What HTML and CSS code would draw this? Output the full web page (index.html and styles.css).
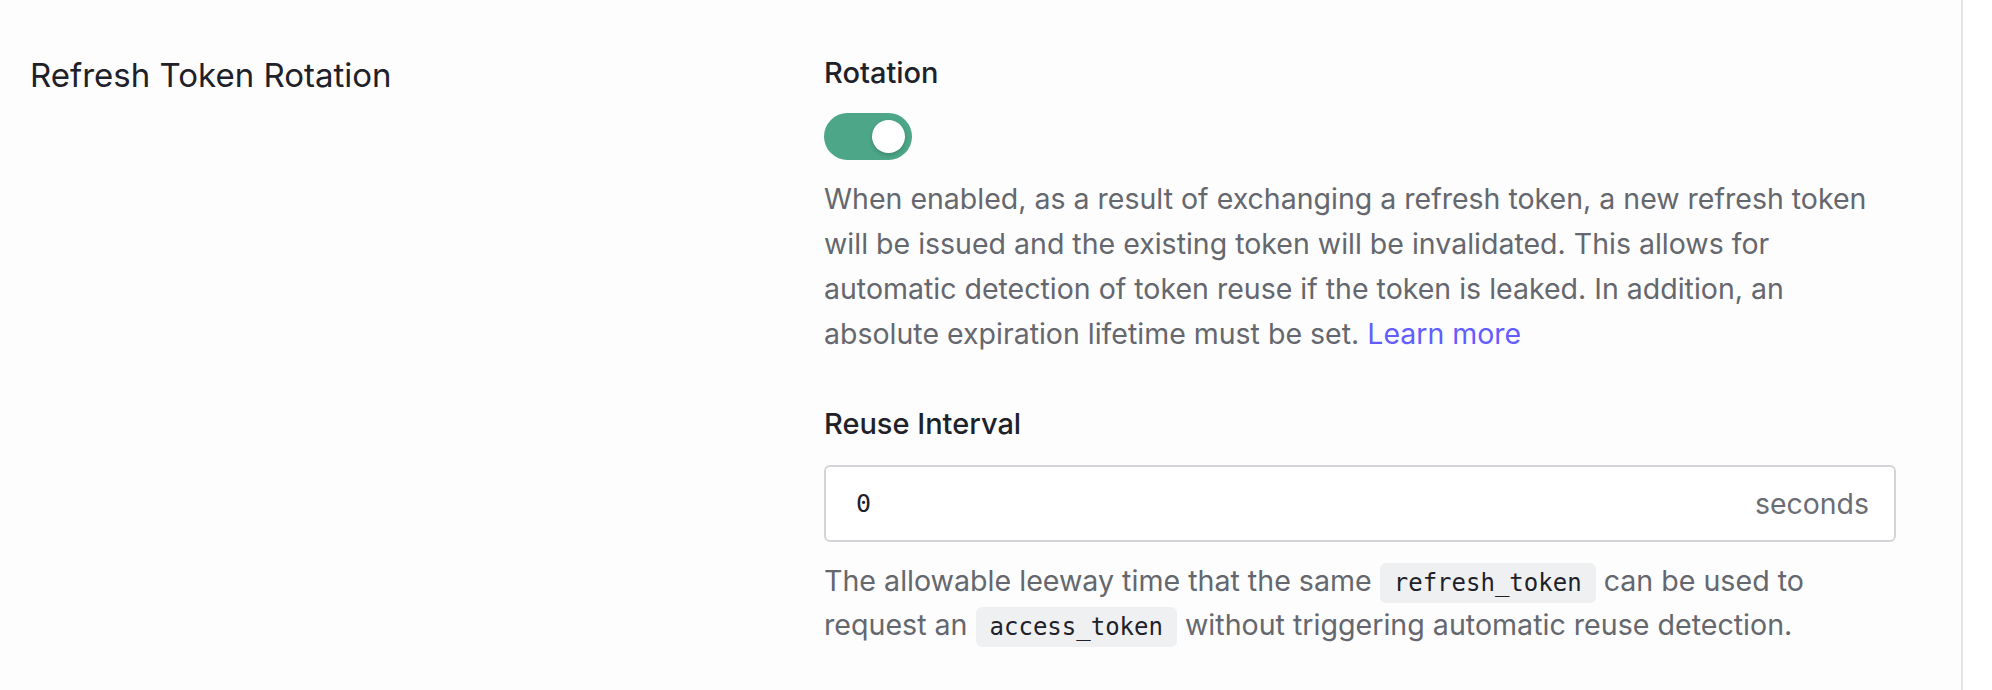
FILE: index.html
```html
<!DOCTYPE html>
<html lang="en">
<head>
<meta charset="utf-8">
<title>Refresh Token Rotation</title>
<link rel="stylesheet" href="styles.css">
</head>
<body>
<div class="page">
  <section class="section">
    <h2 class="section-title">Refresh Token Rotation</h2>
    <div class="fields">
      <div class="field">
        <div class="label">Rotation</div>
        <button class="switch" role="switch" aria-checked="true"><span class="knob"></span></button>
        <p class="help help-wide">When enabled, as a result of exchanging a refresh token, a new refresh token<br>will be issued and the existing token will be invalidated. This allows for<br>automatic detection of token reuse if the token is leaked. In addition, an<br>absolute expiration lifetime must be set. <a class="link" href="#">Learn more</a></p>
      </div>
      <div class="field field-reuse">
        <div class="label">Reuse Interval</div>
        <div class="input-box">
          <input class="input" type="text" value="0">
          <span class="suffix">seconds</span>
        </div>
        <p class="help help-code">The allowable leeway time that the same <code class="code">refresh_token</code> can be used to request an <code class="code">access_token</code> without triggering automatic reuse detection.</p>
      </div>
    </div>
  </section>
</div>
</body>
</html>
```
FILE: styles.css
```css
* { box-sizing: border-box; }
html, body { margin: 0; padding: 0; background: #ffffff; }
body {
  font-family: Inter, "Noto Sans", sans-serif;
  color: #1e2129;
}
.page {
  width: 1963px;
  min-height: 690px;
  border-right: 2px solid #e3e4e7;
  background: #fdfdfd;
}
.section {
  display: grid;
  grid-template-columns: 794px 1072px;
  padding: 55px 0 0 30px;
}
.section-title {
  margin: 1px 0 0 0;
  font-size: 33px;
  font-weight: 400;
  line-height: 38px;
  color: #1e2129;
}
.fields {
  display: flex;
  flex-direction: column;
}
.label {
  font-size: 29px;
  font-weight: 500;
  line-height: 36px;
  color: #1e2129;
}
.switch {
  display: flex;
  align-items: center;
  justify-content: flex-end;
  width: 88px;
  height: 47px;
  margin: 22px 0 0 0;
  padding: 0 7px;
  border: none;
  border-radius: 24px;
  background: #4ca687;
  cursor: pointer;
}
.knob {
  width: 33px;
  height: 33px;
  border-radius: 50%;
  background: #ffffff;
  box-shadow: 0 2px 4px rgba(0, 0, 0, 0.18);
}
.help {
  margin: 16px 0 0 0;
  font-size: 28.5px;
  line-height: 45px;
  color: #65676e;
  white-space: nowrap;
}
.link {
  color: #635dff;
  text-decoration: none;
}
.field-reuse {
  margin-top: 50px;
}
.input-box {
  display: flex;
  align-items: center;
  height: 77px;
  margin-top: 23px;
  padding: 0 25px 0 30px;
  border: 2px solid #d3d4d8;
  border-radius: 6px;
  background: #ffffff;
}
.input {
  flex: 1;
  min-width: 0;
  border: none;
  outline: none;
  background: transparent;
  padding: 0;
  font-family: "DejaVu Sans Mono", "Liberation Mono", monospace;
  font-size: 25px;
  font-variant-numeric: slashed-zero;
  color: #1e2129;
}
.suffix {
  font-size: 28.4px;
  color: #6b6d74;
}
.help-code {
  margin-top: 17px;
  font-size: 28.6px;
  line-height: 44px;
  white-space: normal;
}
.code {
  display: inline-block;
  padding: 0 14px;
  line-height: 40px;
  border-radius: 6px;
  background: #eff0f2;
  font-family: "DejaVu Sans Mono", "Liberation Mono", monospace;
  font-size: 24px;
  color: #1e2129;
  vertical-align: middle;
}
```
